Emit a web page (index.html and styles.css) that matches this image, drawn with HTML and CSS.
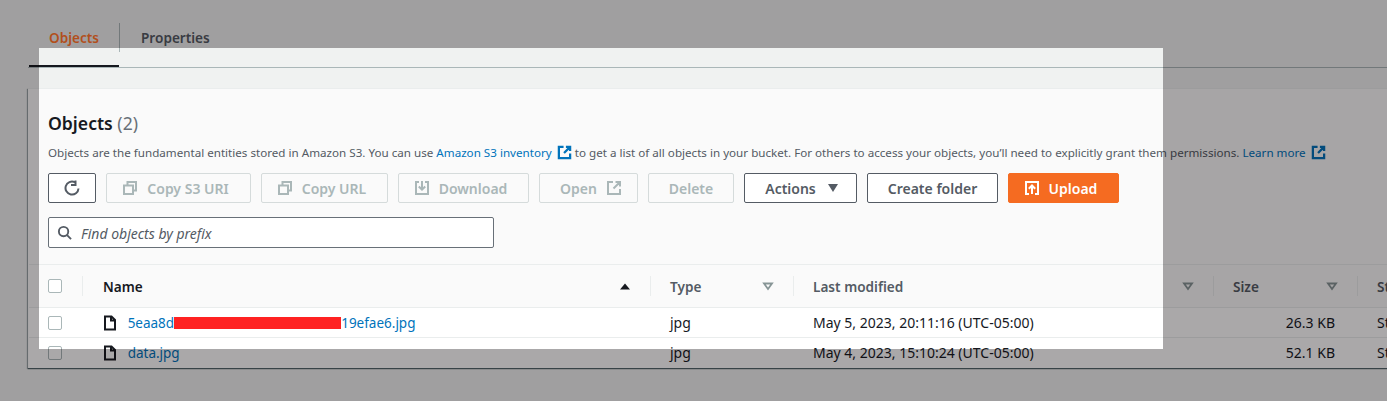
FILE: index.html
```html
<!DOCTYPE html>
<html>
  <head>
    <meta charset="utf-8" />
    <title>Objects</title>
    <link rel="stylesheet" href="styles.css">
  </head>

  <body>
    <!-- tabs -->
    <div class="tabs">
      <a class="tab tab-on"><span class="tab-txt">Objects</span></a>
      <a class="tab">Properties</a>
    </div>

    <!-- objects panel -->
    <section class="panel">
      <div class="panel-top">
        <h2>Objects <span class="count">(2)</span></h2>
        <p class="desc">
          Objects are the fundamental entities stored in Amazon S3. You can use
          <a class="link">Amazon S3 inventory
            <svg class="ext" viewBox="0 0 16 16"><path d="M7 2H2v12h12V9M9.500 2H14v4.500M14 2L7.500 8.500"/></svg></a>
          to get a list of all objects in your bucket. For others to access your objects, you’ll need to explicitly grant them permissions.
          <a class="link">Learn more
            <svg class="ext" viewBox="0 0 16 16"><path d="M7 2H2v12h12V9M9.500 2H14v4.500M14 2L7.500 8.500"/></svg></a>
        </p>

        <div class="btns">
          <button class="btn">
            <svg viewBox="0 0 16 16"><path d="M14.500 8.500A6.500 6.500 0 1 1 10.800 2.200M11.500 0.500v4.500H7"/></svg>
          </button>
          <button class="btn off ico-first">
            <svg viewBox="0 0 16 16"><path d="M5.500 5V2H14v8.500h-3M2 5.500h9V14H2z"/></svg>Copy S3 URI
          </button>
          <button class="btn off ico-first">
            <svg viewBox="0 0 16 16"><path d="M5.500 5V2H14v8.500h-3M2 5.500h9V14H2z"/></svg>Copy URL
          </button>
          <button class="btn off ico-first">
            <svg viewBox="0 0 16 16"><path d="M5 2H2v12h12V2h-3M8 1v8.500M4.800 6.500L8 9.700l3.200-3.200"/></svg>Download
          </button>
          <button class="btn off ico-last">
            Open<svg viewBox="0 0 16 16"><path d="M7 2H2v12h12V9M9.500 2H14v4.500M14 2L7.500 8.500"/></svg>
          </button>
          <button class="btn off">Delete</button>
          <button class="btn ico-last">
            Actions<svg viewBox="0 0 16 16"><path class="solid" d="M3 4h10l-5 8z"/></svg>
          </button>
          <button class="btn">Create folder</button>
          <button class="btn btn-upload ico-first">
            <svg viewBox="0 0 16 16"><path d="M5 14H2V2h12v12h-3M8 14V6M4.800 8.700L8 5.500l3.200 3.200"/></svg>Upload
          </button>
        </div>

        <div class="search">
          <svg viewBox="0 0 16 16"><path d="M11 11l4 4M12 7A5 5 0 1 1 2 7a5 5 0 0 1 10 0z"/></svg>
          <span>Find objects by prefix</span>
        </div>
      </div>

      <!-- table -->
      <table class="tbl">
        <colgroup>
          <col class="c-chk" /><col class="c-name" /><col class="c-type" />
          <col class="c-date" /><col class="c-size" /><col class="c-cls" />
        </colgroup>
        <thead>
          <tr>
            <th><i class="chk"></i></th>
            <th class="on"><div>Name<svg class="sort" viewBox="0 0 12 12"><path class="solid" d="M1 9.500h10L6 3.500z"/></svg></div></th>
            <th><div>Type<svg class="sort" viewBox="0 0 12 12"><path d="M2 3.500h8L6 9z"/></svg></div></th>
            <th><div>Last modified<svg class="sort" viewBox="0 0 12 12"><path d="M2 3.500h8L6 9z"/></svg></div></th>
            <th><div>Size<svg class="sort" viewBox="0 0 12 12"><path d="M2 3.500h8L6 9z"/></svg></div></th>
            <th><div>Storage class</div></th>
          </tr>
        </thead>
        <tbody>
          <tr>
            <td><i class="chk"></i></td>
            <td>
              <svg class="file" viewBox="0 0 16 16"><path d="M3 1.500h6.500L13 5v9.500H3zM9 1.500V5.500h4"/></svg>
              <a class="link fname">5eaa8d<span class="redact"></span>19efae6.jpg</a>
            </td>
            <td>jpg</td>
            <td>May 5, 2023, 20:11:16 (UTC-05:00)</td>
            <td class="num">26.3 KB</td>
            <td>Standard</td>
          </tr>
          <tr>
            <td><i class="chk"></i></td>
            <td>
              <svg class="file" viewBox="0 0 16 16"><path d="M3 1.500h6.500L13 5v9.500H3zM9 1.500V5.500h4"/></svg>
              <a class="link fname">data.jpg</a>
            </td>
            <td>jpg</td>
            <td>May 4, 2023, 15:10:24 (UTC-05:00)</td>
            <td class="num">52.1 KB</td>
            <td>Standard</td>
          </tr>
        </tbody>
      </table>
    </section>

    <!-- dims everything except the lit window -->
    <div class="spot"></div>
  </body>
</html>
```

FILE: styles.css
```css
* {
  box-sizing: border-box;
}
html,
body {
  height: 401px;
  overflow: hidden;
}
body {
  position: relative;
  margin: 0;
  padding-top: 23px;
  background: #f0f2f1;
  color: #16191f;
  font-family: "Noto Sans", "Liberation Sans", sans-serif;
  font-size: 14px;
}
svg {
  fill: none;
  stroke: currentColor;
  stroke-width: 2;
}
svg .solid {
  fill: currentColor;
  stroke: none;
}

/* tabs */
.tabs {
  display: flex;
  height: 45px;
  margin-left: 28px;
  border-bottom: 1px solid #aab7b8;
}
.tab {
  height: 44px;
  padding: 5px 20px 0;
  font-size: 13.600px;
  font-weight: 600;
  line-height: 19px;
  color: #545b64;
}
.tab-on {
  position: relative;
  width: 90px;
  margin-left: 1px;
  padding-right: 0;
  border-bottom: 2px solid #16191f;
}
.tab-on::after {
  content: "";
  position: absolute;
  top: 0;
  right: -1px;
  width: 1px;
  height: 29px;
  background: #aab7b8;
}
/* sits above the dim layer, the orange stays brighter than the rest */
.tab-txt {
  position: relative;
  z-index: 2;
  color: #b24f1c;
}
.tab-on + .tab {
  padding-left: 22px;
}

/* panel */
.panel {
  width: 1500px;
  height: 280px;
  margin: 20px 0 0 28px;
  background: #fafafa;
  border-top: 1px solid #eaeded;
  box-shadow: 0 1px 1px 0 rgba(0, 28, 36, 0.5),
    -1px 1px 1px 0 rgba(0, 28, 36, 0.3);
}
.panel-top {
  padding: 22px 20px 16px;
}
h2 {
  margin: 0;
  font-size: 17.600px;
  line-height: 24px;
  font-weight: 600;
}
.count {
  font-weight: 400;
  color: #687078;
}
.desc {
  margin: 9px 0 11px;
  font-size: 11.640px;
  line-height: 18px;
  color: #545b64;
  white-space: nowrap;
}
.link {
  color: #0073bb;
}
.ext {
  width: 15px;
  height: 15px;
  margin-left: 2px;
  vertical-align: -3px;
  stroke-width: 2.400;
}

/* buttons */
.btns {
  display: grid;
  grid-template-columns: 48px 145px 127px 131px 99px 86px 113px 131px 111px;
  gap: 10px;
  justify-content: start;
}
.btn {
  display: flex;
  align-items: center;
  justify-content: center;
  gap: 9px;
  height: 30px;
  padding: 0;
  background: #fff;
  border: 1px solid #545b64;
  border-radius: 2px;
  color: #545b64;
  font: 600 14px "Noto Sans", "Liberation Sans", sans-serif;
  white-space: nowrap;
}
.btn svg {
  width: 16px;
  height: 16px;
  flex: none;
}
.off {
  background: #fafafa;
  border-color: #d5dbdb;
  color: #aab7b8;
}
.ico-first {
  padding-right: 6px;
}
.ico-last {
  padding-left: 5px;
}
.btn-upload {
  background: #f56b21;
  border-color: #f56b21;
  color: #fff;
}

/* search */
.search {
  display: flex;
  align-items: center;
  gap: 9px;
  width: 446px;
  height: 31px;
  margin-top: 14px;
  padding-left: 8px;
  background: #fff;
  border: 1px solid #687078;
  border-radius: 2px;
  font-style: italic;
  color: #545b64;
}
.search span {
  padding-top: 2px;
}
.search svg {
  width: 15px;
  height: 15px;
}

/* table */
.tbl {
  width: 1499px;
  margin-left: 1px;
  table-layout: fixed;
  border-collapse: collapse;
}
.c-chk { width: 54px; }
.c-name { width: 567px; }
.c-type { width: 143px; }
.c-date { width: 420px; }
.c-size { width: 144px; }
.tbl th {
  position: relative;
  height: 43px;
  padding: 0 0 0 20px;
  background: #fafafa;
  border-top: 1px solid #eaeded;
  border-bottom: 1px solid #eaeded;
  color: #545b64;
  font-size: 13.600px;
  font-weight: 600;
  text-align: left;
}
.tbl th.on {
  color: #16191f;
}
.tbl th:first-child,
.tbl td:first-child {
  padding-left: 19px;
}
.tbl th + th::before {
  content: "";
  position: absolute;
  left: 0;
  top: 11px;
  height: 20px;
  border-left: 1px solid #eaeded;
}
.tbl th.on::before {
  left: -1px;
}
.tbl th div {
  display: flex;
  align-items: center;
  justify-content: space-between;
  padding-right: 19px;
}
.sort {
  width: 12px;
  height: 12px;
  color: #879596;
  stroke-width: 1.800;
}
.on .sort {
  color: #16191f;
}
.tbl td {
  height: 30px;
  padding: 0 0 0 20px;
  background: #fff;
  border-bottom: 1px solid #eaeded;
  white-space: nowrap;
}
.tbl td.num {
  padding-right: 22px;
  text-align: right;
}
.tbl tbody tr:last-child td {
  border-bottom: 0;
}
.chk {
  display: block;
  width: 14px;
  height: 14px;
  background: #fff;
  border: 1px solid #aab7b8;
  border-radius: 2px;
}
.file {
  width: 16px;
  height: 16px;
  margin: 0 6px 0 -1px;
  vertical-align: -3px;
  color: #16191f;
}
.fname {
  font-size: 13.500px;
}
.redact {
  display: inline-block;
  width: 167px;
  height: 12px;
  background: #ff2222;
  vertical-align: -1px;
}

/* dim layer with a hole */
.spot {
  position: absolute;
  left: 39px;
  top: 48px;
  width: 1124px;
  height: 301px;
  box-shadow: 0 0 0 1500px rgba(6, 0, 3, 0.34);
  pointer-events: none;
}
```
